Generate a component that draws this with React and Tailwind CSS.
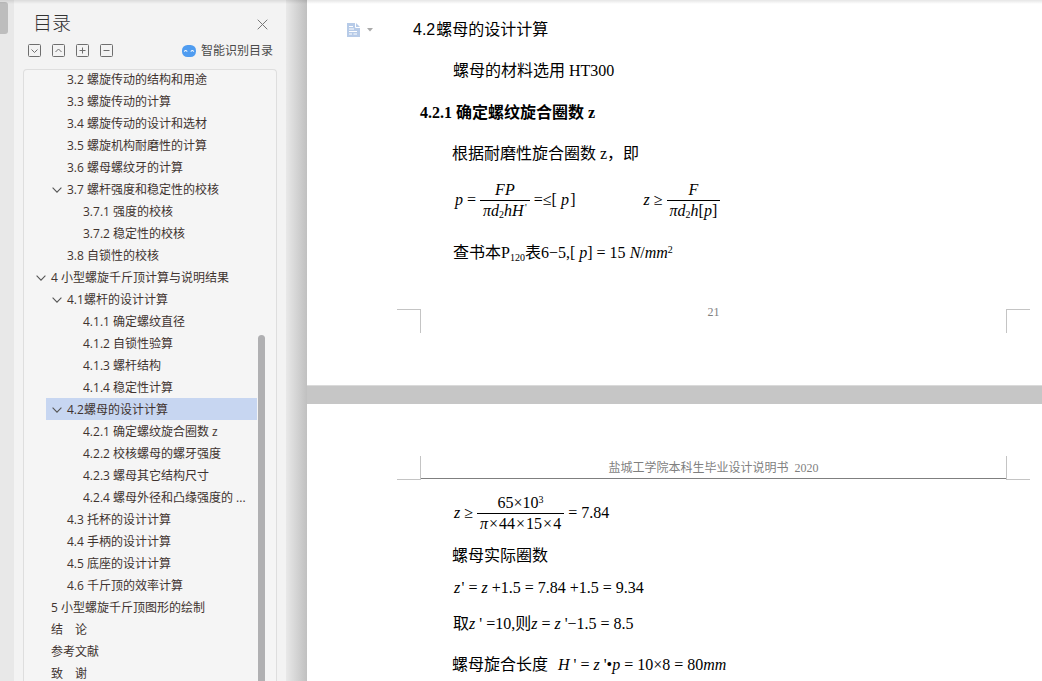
import React from 'react'

const outline = [
    { level: 2, title: '3.2 螺旋传动的结构和用途' },
    { level: 2, title: '3.3 螺旋传动的计算' },
    { level: 2, title: '3.4 螺旋传动的设计和选材' },
    { level: 2, title: '3.5 螺旋机构耐磨性的计算' },
    { level: 2, title: '3.6 螺母螺纹牙的计算' },
    { level: 2, title: '3.7 螺杆强度和稳定性的校核', open: true },
    { level: 3, title: '3.7.1 强度的校核' },
    { level: 3, title: '3.7.2 稳定性的校核' },
    { level: 2, title: '3.8 自锁性的校核' },
    { level: 1, title: '4 小型螺旋千斤顶计算与说明结果', open: true },
    { level: 2, title: '4.1螺杆的设计计算', open: true },
    { level: 3, title: '4.1.1 确定螺纹直径' },
    { level: 3, title: '4.1.2 自锁性验算' },
    { level: 3, title: '4.1.3 螺杆结构' },
    { level: 3, title: '4.1.4 稳定性计算' },
    { level: 2, title: '4.2螺母的设计计算', open: true, active: true },
    { level: 3, title: '4.2.1 确定螺纹旋合圈数 z' },
    { level: 3, title: '4.2.2 校核螺母的螺牙强度' },
    { level: 3, title: '4.2.3 螺母其它结构尺寸' },
    { level: 3, title: '4.2.4 螺母外径和凸缘强度的 ...' },
    { level: 2, title: '4.3 托杯的设计计算' },
    { level: 2, title: '4.4 手柄的设计计算' },
    { level: 2, title: '4.5 底座的设计计算' },
    { level: 2, title: '4.6 千斤顶的效率计算' },
    { level: 1, title: '5 小型螺旋千斤顶图形的绘制' },
    { level: 1, title: '结　论' },
    { level: 1, title: '参考文献' },
    { level: 1, title: '致　谢' },
]

const tools = [
    { label: '展开', d: 'M3.5 5.5l3 3 3-3' },
    { label: '收起', d: 'M3.5 8l3-3 3 3' },
    { label: '添加', d: 'M3.5 6.5h6M6.5 3.5v6' },
    { label: '移除', d: 'M3.5 6.5h6' },
]

// indent of a row: 16px for each level
const indents = { 1: 'pl-[10px]', 2: 'pl-[26px]', 3: 'pl-[42px]' }
const activeIndent = 'ml-[22px] pl-1'

const OutlineRow = ({ item }) => (
    <li className={`flex h-[22px] items-center pt-[2px] ${item.active ? `${activeIndent} bg-[#c7d6f1]` : indents[item.level]}`}>
        {item.open ?
            <button type="button" aria-label="折叠" className="flex w-[17px] shrink-0 pl-[2px]">
                <svg width="10" height="6" viewBox="0 0 10 6" fill="none" stroke="#555" strokeWidth="1.1">
                    <path d="M.6.7L5 5.1 9.4.7" />
                </svg>
            </button>
            :
            <span className="w-[17px] shrink-0"></span>
        }
        <a href="#" className="whitespace-nowrap">{item.title}</a>
    </li>
)

const Sidebar = () => (
    <aside className="flex w-[272px] shrink-0 flex-col bg-[#f3f3f3] px-[9px] font-['Open_Sans','Noto_Sans_CJK_SC',sans-serif] text-xs text-[#40332f]">
        <div className="flex h-11 items-center justify-between pl-[10px] pr-[9px] pt-1">
            <h1 className="text-[19px] font-light text-[#333]">目录</h1>
            <button type="button" aria-label="关闭">
                <svg width="11" height="11" viewBox="0 0 11 11" stroke="#777" strokeWidth="1">
                    <path d="M.7.7l9.6 9.6M10.3.7L.7 10.3" />
                </svg>
            </button>
        </div>
        <div className="flex h-[25px] items-start justify-between pl-[5px] pr-1">
            <div className="flex gap-[11px]">
                {tools.map((tool) => (
                    <button type="button" key={tool.label} aria-label={tool.label}>
                        <svg width="13" height="13" viewBox="0 0 13 13" fill="none" stroke="#6e6e6e">
                            <rect x=".5" y=".5" width="12" height="12" rx="1" />
                            <path d={tool.d} />
                        </svg>
                    </button>
                ))}
            </div>
            <button type="button" className="flex items-center gap-[5px] leading-[14px] text-[#4a4a4a]">
                <svg width="14" height="12" viewBox="0 0 14 12">
                    <rect width="14" height="12" rx="5.5" fill="#4f9cf0" />
                    <path d="M2.3 6.6c.4-1.5 2.4-1.5 2.8 0M8.9 6.6c.4-1.5 2.4-1.5 2.8 0" fill="none" stroke="#fff" strokeWidth="1.2" />
                </svg>
                智能识别目录
            </button>
        </div>
        <nav className="flex min-h-0 flex-1 overflow-hidden rounded-t-[4px] border border-b-0 border-[#dedede] bg-[#f5f5f5] pr-[11px]">
            <ul className="-mt-[2px] min-w-0 flex-1">
                {outline.map((item) => <OutlineRow key={item.title} item={item} />)}
            </ul>
            <div className="ml-px mt-[265px] w-[7px] shrink-0 rounded-t-full bg-[#b0b0b2]"></div>
        </nav>
    </aside>
)

const Fraction = ({ top, bottom }) => (
    <span className="flex flex-col text-center leading-5">
        <span className="flex h-5 justify-center px-[3px]">{top}</span>
        <span className="h-px bg-black"></span>
        <span className="flex h-5 justify-center px-[3px]">{bottom}</span>
    </span>
)

// terms and operators of a product, set slightly apart
const Product = ({ terms }) => (
    <span className="flex gap-px">
        {terms.map((term, i) => <span key={i}>{term}</span>)}
    </span>
)

const Sub = ({ children }) => <sub className="text-[10px] leading-none not-italic">{children}</sub>
const Sup = ({ children }) => <sup className="text-[10px] leading-none not-italic">{children}</sup>

const Document = () => (
    <main className="min-w-0 flex-1 bg-[#c6c6c6] font-['Liberation_Serif','Noto_Sans_CJK_SC',serif] text-base text-black">
        <section className="border-b border-[#dadada] bg-white pb-[52px] pt-[9px]">
            <div className="flex h-[41px] items-center pl-10">
                <button type="button" aria-label="段落" className="flex items-center gap-[7px]">
                    <svg width="13" height="14" viewBox="0 0 13 14">
                        <path d="M0 0h9l4 4v10H0z" fill="#b7cbe8" />
                        <path d="M8.5 0v4.5H13M2 3.5h4M2 6h5M2 8.5h8M2 11h3M6.5 11H10" fill="none" stroke="#fff" />
                    </svg>
                    <svg width="6" height="4" viewBox="0 0 6 4">
                        <path d="M0 0h6L3 3.5z" fill="#aaa" />
                    </svg>
                </button>
                <h2 className="flex gap-px pl-10 font-['Liberation_Sans','Noto_Sans_CJK_SC',sans-serif]">
                    <span>4.2</span>
                    <span>螺母的设计计算</span>
                </h2>
            </div>
            <p className="flex h-[42px] items-center pl-[146px]">螺母的材料选用 HT300</p>
            <h3 className="flex h-[42px] items-center pl-[113px] font-bold">4.2.1 确定螺纹旋合圈数 z</h3>
            <p className="flex h-10 items-center pl-[145px]">根据耐磨性旋合圈数 z，即</p>
            <div className="flex h-[52px] items-center gap-[68px] pl-[148px]">
                <div className="flex items-center gap-1">
                    <i>p</i>
                    <span>=</span>
                    <Fraction top={<i>FP</i>} bottom={<i>πd<Sub>2</Sub>hH&#8202;<Sup>'</Sup></i>} />
                    <span>=≤[<i> p</i>&#8202;]</span>
                </div>
                <div className="flex items-center gap-1">
                    <i>z</i>
                    <span>≥</span>
                    <Fraction top={<i>F</i>} bottom={<span><i>πd<Sub>2</Sub>h</i>[<i>p</i>]</span>} />
                </div>
            </div>
            <p className="flex h-[54px] items-center pl-[146px]">
                <span>查书本P<Sub>120</Sub>表6−5,[<i> p</i>] = 15 <i>N</i>/<i>mm</i><Sup>2</Sup></span>
            </p>
            <div className="mt-[29px] flex justify-between pl-[90px] pr-3 text-[#7f7f7f]">
                <span className="size-6 border-r border-t border-[#c4c4c4]"></span>
                <span className="text-xs leading-[6px]">21</span>
                <span className="size-6 border-l border-t border-[#c4c4c4]"></span>
            </div>
        </section>
        <section className="mt-[18px] bg-white pt-[52px]">
            <header className="flex pl-[90px] pr-3 text-xs text-[#7f7f7f]">
                <span className="size-6 shrink-0 border-b border-r border-[#c4c4c4]"></span>
                <span className="mb-px flex-1 border-b border-[#7f7f7f] pt-[2px] text-center leading-5">盐城工学院本科生毕业设计说明书&nbsp; 2020</span>
                <span className="size-6 shrink-0 border-b border-l border-[#c4c4c4]"></span>
            </header>
            <div className="mt-[7px] flex h-[52px] items-center gap-1 pl-[147px]">
                <i>z</i>
                <span>≥</span>
                <Fraction
                    top={<span>65×10<Sup>3</Sup></span>}
                    bottom={<Product terms={[<i>π</i>, '×', '44', '×', '15', '×', '4']} />}
                />
                <span>= 7.84</span>
            </div>
            <p className="flex h-[34px] items-center pl-[145px]">螺母实际圈数</p>
            <p className="flex h-[30px] items-center pl-[147px]">
                <span><i>z</i>&#8202;' = <i>z</i> +1.5 = 7.84 +1.5 = 9.34</span>
            </p>
            <p className="flex h-[41px] items-center pl-[146px]">
                <span>取<i>z</i> ' =10,则<i>z</i> = <i>z</i> '−1.5 = 8.5</span>
            </p>
            <p className="flex h-[41px] items-center gap-[10px] pl-[145px]">
                <span>螺母旋合长度</span>
                <span><i>H</i> ' = <i>z</i> '•<i>p</i> = 10×8 = 80<i>mm</i></span>
            </p>
        </section>
    </main>
)

const App = () => {
    return (
        <div className="relative flex h-screen overflow-hidden bg-white">
            <div className="w-[14px] shrink-0 bg-[#e8e8e8] pt-[2px]">
                <div className="h-8 w-2 rounded-r-[3px] bg-[#bdbdbd]"></div>
            </div>
            <Sidebar />
            <div className="w-[21px] shrink-0 bg-linear-to-r from-[#e9e9e9] to-[#c0c0c0]"></div>
            <Document />
            <div className="absolute inset-x-0 top-0 h-1 bg-linear-to-b from-black/10 to-transparent"></div>
        </div>
    )
}

export default App
